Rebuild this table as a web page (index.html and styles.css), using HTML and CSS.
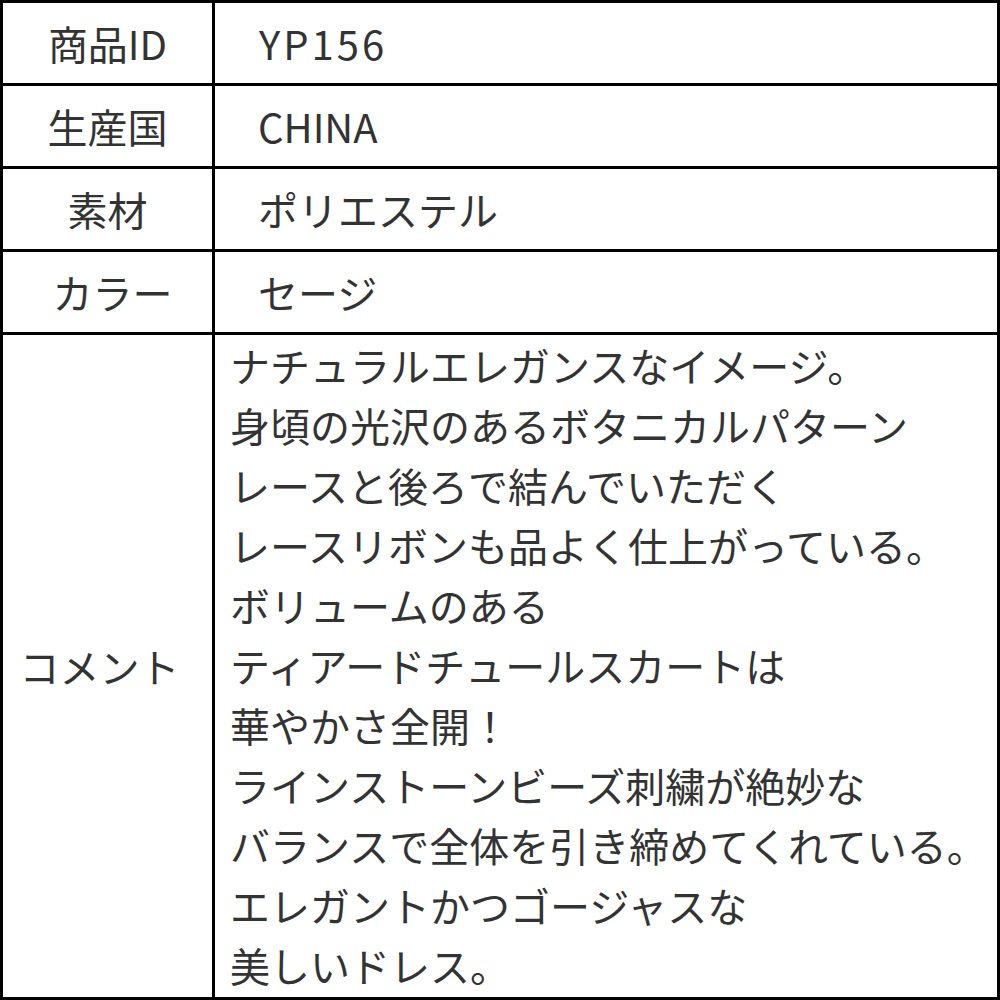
FILE: index.html
```html
<!DOCTYPE html>
<html lang="ja">
<head>
<meta charset="utf-8">
<link rel="stylesheet" href="styles.css">
</head>
<body>
<div class="spec">
  <div class="label">商品ID</div>
  <div class="value value-code">YP156</div>
  <div class="label">生産国</div>
  <div class="value">CHINA</div>
  <div class="label">素材</div>
  <div class="value">ポリエステル</div>
  <div class="label label-color">カラー</div>
  <div class="value">セージ</div>
  <div class="label label-comment">コメント</div>
  <div class="comment">ナチュラルエレガンスなイメージ。<br>身頃の光沢のあるボタニカルパターン<br>レースと後ろで結んでいただく<br>レースリボンも品よく仕上がっている。<br>ボリュームのある<br>ティアードチュールスカートは<br>華やかさ全開！<br>ラインストーンビーズ刺繍が絶妙な<br>バランスで全体を引き締めてくれている。<br>エレガントかつゴージャスな<br>美しいドレス。</div>
</div>
</body>
</html>
```
FILE: styles.css
```css
html, body {
  margin: 0;
  padding: 0;
  background: #fff;
}
.spec {
  width: 1000px;
  height: 1000px;
  box-sizing: border-box;
  display: grid;
  grid-template-columns: 209px 782px;
  grid-template-rows: 80px 80px 80px 80px 662px;
  gap: 3px;
  padding: 3px;
  background: #000;
  font-family: "Noto Sans CJK JP", "Noto Sans", sans-serif;
  font-size: 40px;
  color: #333;
}
.label, .value, .comment {
  background: #fff;
  display: flex;
  align-items: center;
}
.label {
  justify-content: center;
}
.label-color {
  padding-left: 10px;
}
.label-comment {
  padding-right: 16px;
}
.value {
  padding-left: 43px;
}
.value-code {
  letter-spacing: 3px;
  padding-left: 44px;
}
.comment {
  display: block;
  padding-left: 15px;
  line-height: 60px;
  white-space: nowrap;
}
```
